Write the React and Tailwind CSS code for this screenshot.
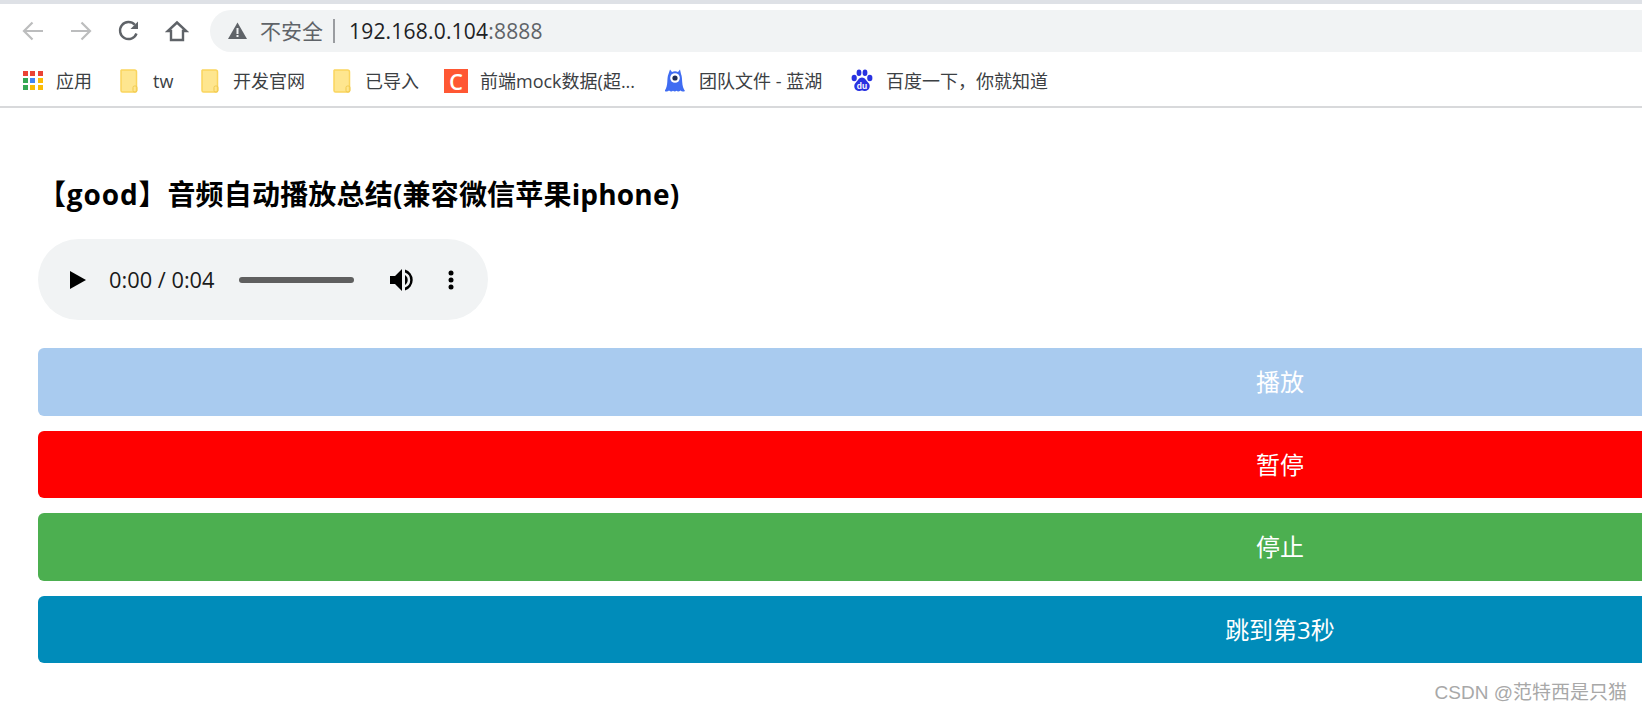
const cjk = { fontFamily: '"Open Sans","Noto Sans CJK SC",sans-serif' };

function Folder() {
  return (
    <svg width="18" height="24" viewBox="0 0 18 24" className="shrink-0">
      <path d="M1.500 1h13a2 2 0 0 1 2 2v18.500a1.500 1.500 0 0 1-1.500 1.500H2.500A1.500 1.500 0 0 1 1 21.500V1.500z" fill="#fee68f" stroke="#fad55e" strokeWidth="1.500" />
      <rect x="13" y="17" width="4" height="6" rx="1.500" fill="none" stroke="#f0c94f" strokeWidth="1" />
    </svg>
  );
}

function Apps() {
  const colors = ['#ea4335', '#ea4335', '#ea4335', '#34a853', '#4285f4', '#fbbc05', '#34a853', '#fbbc05', '#fbbc05'];
  return (
    <div className="grid grid-cols-3 gap-[2px] w-[20px] shrink-0">
      {colors.map((c, i) => (
        <div key={i} className="w-[5px] h-[5px]" style={{ background: c }} />
      ))}
    </div>
  );
}

function Bookmark({ icon, label, className }) {
  return (
    <div className={`flex items-center ${className}`}>
      {icon}
      <span className="text-[18px] text-[#3c4043] whitespace-nowrap leading-none">{label}</span>
    </div>
  );
}

function Monster() {
  return (
    <svg width="20" height="26" viewBox="0 0 20 26" className="shrink-0">
      <path d="M5 1.500l2 2.500a7 7 0 0 1 6 0l2-2.500 1 4.500c1 2 1 5 1.200 8 .2 4 1.300 7 2.800 9-2 1-3.500.5-4.500-.5-1.500 1.300-3 1.300-4 .3-1 1-2.500 1-3.500 0-1 1-2.500 1-4-.3-1 1-2.500 1.500-4.500.5 1.500-2 2.600-5 2.800-9 .2-3 .2-6 1.200-8z" fill="#3f6cf2" />
      <circle cx="10" cy="10" r="4.800" fill="#fff" />
      <circle cx="10" cy="10" r="2.600" fill="#1d2b55" />
    </svg>
  );
}

function Paw() {
  return (
    <svg width="22" height="24" viewBox="0 0 22 24" className="shrink-0">
      <ellipse cx="3.200" cy="9" rx="2.600" ry="3.200" fill="#2932e1" />
      <ellipse cx="8" cy="3.800" rx="2.400" ry="3.200" fill="#2932e1" />
      <ellipse cx="14" cy="3.800" rx="2.400" ry="3.200" fill="#2932e1" />
      <ellipse cx="18.800" cy="9" rx="2.600" ry="3.200" fill="#2932e1" />
      <path d="M11 8.500c3 0 4 3 6.500 5.500 2.500 2.500 1 8-3.500 8-1.500 0-2-.5-3-.5s-1.500.5-3 .5c-4.500 0-6-5.500-3.500-8C7 11.500 8 8.500 11 8.500z" fill="#2932e1" />
      <text x="11" y="20" textAnchor="middle" fontSize="8.500" fontWeight="700" fill="#fff" fontFamily="Liberation Sans">du</text>
    </svg>
  );
}

function ActionButton({ label, className }) {
  return (
    <button className={`block w-[2484px] rounded-[6px] text-white text-[24px] text-center leading-none ${className}`}>
      {label}
    </button>
  );
}

export default function App() {
  return (
    <div className="relative w-[1642px] h-[711px] overflow-hidden bg-white" style={cjk}>
      <div className="h-[4px] bg-[#dee1e6]" />
      <div className="h-[102px] border-b-2 border-[#d8d9db] box-content -mb-[2px]">
        <div className="flex items-center h-[53px] pt-[1px] pl-[21px]">
          <svg width="24" height="24" viewBox="0 0 24 24" fill="none" stroke="#bcbdbe" strokeWidth="2.200" className="shrink-0">
            <path d="M22 12H3M11.500 3.500L3 12l8.500 8.500" />
          </svg>
          <svg width="24" height="24" viewBox="0 0 24 24" fill="none" stroke="#bcbdbe" strokeWidth="2.200" className="ml-[24px] shrink-0">
            <path d="M2 12h19M12.500 3.500L21 12l-8.500 8.500" />
          </svg>
          <svg width="24" height="24" viewBox="0 0 24 24" fill="none" className="ml-[24px] shrink-0">
            <path d="M19.500 14.500A8.500 8.500 0 1 1 17.800 5.800" stroke="#5f6368" strokeWidth="2.400" />
            <path d="M21 2.500V10h-7.500z" fill="#5f6368" />
          </svg>
          <svg width="24" height="24" viewBox="0 0 24 24" fill="none" stroke="#5f6368" strokeWidth="2.400" className="ml-[24px] shrink-0">
            <path d="M12 3.500L2.800 12H6v9h12v-9h3.200z" strokeLinejoin="miter" />
          </svg>
          <div className="ml-[21px] flex-1 h-[42px] rounded-l-[21px] bg-[#f1f3f4] flex items-center pl-[17px] min-w-0">
            <svg width="21" height="20" viewBox="0 0 21 20" className="shrink-0">
              <path d="M10.500 1.500L20 18H1z" fill="#5f6368" />
              <rect x="9.500" y="7" width="2" height="6" fill="#f1f3f4" />
              <rect x="9.500" y="14" width="2" height="2" fill="#f1f3f4" />
            </svg>
            <span className="ml-[12px] text-[21px] leading-none text-[#5f6368] whitespace-nowrap">不安全</span>
            <div className="ml-[10px] w-[2px] h-[24px] bg-[#9a9ca0]" />
            <span className="ml-[14px] text-[21px] leading-none whitespace-nowrap text-[#202124] tracking-[0.2px]">
              192.168.0.104<span className="text-[#5f6368]">:8888</span>
            </span>
          </div>
        </div>
        <div className="flex items-center h-[47px] pl-[23px]">
          <Bookmark className="gap-[13px] w-[98px]" icon={<Apps />} label="应用" />
          <Bookmark className="gap-[15px] ml-[-1px] w-[81px]" icon={<Folder />} label="tw" />
          <Bookmark className="gap-[14px] w-[132px]" icon={<Folder />} label="开发官网" />
          <Bookmark className="gap-[14px] w-[111px]" icon={<Folder />} label="已导入" />
          <Bookmark
            className="gap-[12px] w-[223px]"
            icon={
              <div className="w-[24px] h-[24px] bg-[#ff5733] flex items-center justify-center text-white text-[22px] font-semibold leading-none shrink-0">C</div>
            }
            label="前端mock数据(超..."
          />
          <Bookmark className="gap-[14px] w-[186px] ml-[-2px]" icon={<Monster />} label="团队文件 - 蓝湖" />
          <Bookmark className="gap-[13px]" icon={<Paw />} label="百度一下，你就知道" />
        </div>
      </div>

      <div className="pl-[38px]">
        <h3 className="pt-[69px] text-[28px] font-bold leading-[38px] text-black whitespace-nowrap tracking-[0.18px]">
          <span className="tracking-[0.87px]">【good】</span>音频自动播放总结(兼容微信苹果iphone)
        </h3>
        <div className="mt-[26px] w-[450px] h-[81px] rounded-[40.500px] bg-[#f1f3f4] flex items-center pl-[31px]">
          <svg width="18" height="20" viewBox="0 0 18 20" className="shrink-0">
            <path d="M1 1l16 9-16 9z" fill="#000" />
          </svg>
          <span className="ml-[22px] text-[21.800px] leading-none whitespace-nowrap text-[#1a1a1a]">
            0:00 / 0:04
          </span>
          <div className="ml-[24px] w-[115px] h-[6px] rounded-[3px] bg-[#5f5f5f]" />
          <svg width="26" height="26" viewBox="0 0 26 26" className="ml-[35px] shrink-0">
            <path d="M1 9h5l7-7v22l-7-7H1z" fill="#000" />
            <path d="M16 8a6 6 0 0 1 0 10z" fill="#000" />
            <path d="M16 2.500a11 11 0 0 1 0 21v-3a8 8 0 0 0 0-15z" fill="#000" />
          </svg>
          <svg width="6" height="20" viewBox="0 0 6 20" className="ml-[33px] shrink-0">
            <circle cx="3" cy="3" r="2.500" fill="#000" />
            <circle cx="3" cy="10" r="2.500" fill="#000" />
            <circle cx="3" cy="17" r="2.500" fill="#000" />
          </svg>
        </div>
        <div className="mt-[28px] flex flex-col gap-[15px]">
          <ActionButton label="播放" className="h-[68px] bg-[#a9cbef]" />
          <ActionButton label="暂停" className="h-[67px] bg-[#ff0000]" />
          <ActionButton label="停止" className="h-[68px] bg-[#4caf50]" />
          <ActionButton label="跳到第3秒" className="h-[67px] bg-[#008cba]" />
        </div>
      </div>

      <div
        className="absolute right-[15px] bottom-[9px] text-[19px] leading-none text-[#a8a8a8] whitespace-nowrap"
        style={{ fontFamily: '"Liberation Sans","Noto Sans CJK SC",sans-serif' }}
      >
        CSDN @范特西是只猫
      </div>
    </div>
  );
}
